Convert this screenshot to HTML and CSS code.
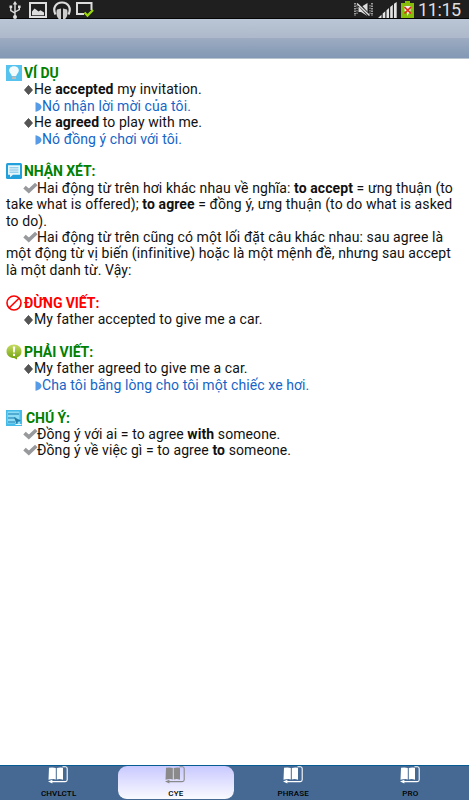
FILE: index.html
```html
<!DOCTYPE html>
<html lang="vi">
<head>
  <meta charset="UTF-8" />
  <meta name="viewport" content="width=device-width, initial-scale=1.0" />
  <title>CYE</title>
  <link rel="stylesheet" href="styles.css">
</head>
<body>
  <svg class="defs" width="0" height="0">
    <defs>
      <linearGradient id="green" x1="0" y1="0" x2="0" y2="1">
        <stop offset="0" stop-color="#c6dc62" />
        <stop offset="1" stop-color="#6fa00c" />
      </linearGradient>
      <symbol id="diamond" viewBox="0 0 9 10"><path d="M4.5 .5 8.5 5 4.5 9.5.5 5z" fill="#555" stroke="#444" stroke-width=".8" /></symbol>
      <symbol id="arrow" viewBox="0 0 7 10"><path d="M.5.3C4 .8 6.5 3 6.5 5S4 9.2.5 9.7z" fill="#559be8" /></symbol>
      <symbol id="check" viewBox="0 0 15 12"><path d="M1.5 5.2 5.8 9 13.3 2" fill="none" stroke="#98999d" stroke-width="3.7" /></symbol>
      <symbol id="book" viewBox="0 0 20 18">
        <path d="M1 1.8Q5 1 7.8 2V13.4Q5 12.6.5 13.8zM8.8 2Q12 1 15 1.8V13.8Q12 12.6 8.8 13.4z" fill="currentColor" />
        <path d="M14.5 .8H17.5Q19.2.8 19.2 2.8V13.8Q19.2 15.6 17.3 15.6H3" fill="none" stroke="currentColor" stroke-width="1.1" />
        <path d="M0 15.6 4.4 13.8V17.6z" fill="currentColor" />
      </symbol>
    </defs>
  </svg>

  <header class="status">
    <div class="status-left">
      <svg class="usb" width="12" height="18" viewBox="0 0 12 18" fill="none" stroke="#ddd" stroke-width="1.4">
        <path d="M6 2V15M1.8 6V9.5L6 12.2M10.3 6V8.5L6 11" />
        <path d="M6 0 8.3 3.6H3.7zM.5 4.5H3.2V7H.5zM9 4.5H11.6V7H9z" fill="#ddd" stroke="none" />
        <circle cx="6" cy="16" r="2" fill="#ddd" stroke="none" />
      </svg>
      <svg class="photo" width="18" height="16" viewBox="0 0 18 16">
        <rect x="1" y="1" width="16" height="14" fill="none" stroke="#ddd" stroke-width="2" />
        <path d="M3 13.3V9.5L5.5 6.5 7 7.5 9.5 9.5 11.5 8.3 15 10.5V13.3z" fill="#ddd" />
      </svg>
      <svg class="phones" width="18" height="18" viewBox="0 0 18 18">
        <path d="M2.5 13.5C-.8 7 3 1.5 9 1.5S18.8 7 15.5 13.5" fill="none" stroke="#ddd" stroke-width="2.2" />
        <path d="M4 8.5 8 7.5V18H6C4 17 2.7 12 4 8.5zM14 8.5 10 7.5V18H12C14 17 15.3 12 14 8.5z" fill="#ccc" />
      </svg>
      <svg width="18" height="16" viewBox="0 0 18 16" fill="none">
        <path d="M8 12H1V1H15.5V8" stroke="#ddd" stroke-width="2" />
        <path d="M8.5 10.5 11.5 13.5 17 8" stroke="#9bd60b" stroke-width="2.3" />
      </svg>
    </div>
    <div class="status-right">
      <svg class="mute" width="19" height="15" viewBox="0 0 19 15">
        <path d="M4.5 5H7L13.5 1V14L7 10H4.5z" fill="#ddd" />
        <path d="M3.5 1 15.5 14" stroke="#1f1f1f" stroke-width="3" />
        <path d="M3 1.5 15.5 13.5" stroke="#ddd" stroke-width="1.5" />
        <path d="M1 1V14M18 1V14" stroke="#ddd" stroke-width="1.3" stroke-dasharray="1.5 1" />
        <path d="M3 3V12M16 3V12" stroke="#aaa" stroke-dasharray="1.5 1" />
      </svg>
      <svg class="signal" width="19" height="16" viewBox="0 0 19 16" fill="#e4e4e4">
        <path d="M0 16 3.5 12.7V16zM4.7 16V11.5L7.3 9.2V16zM8.5 16V8.2L11 6V16zM12.2 16V5L14.8 2.8V16zM16 16V1.8L18.7 0V16z" />
      </svg>
      <svg class="battery" width="13" height="17" viewBox="0 0 13 17">
        <path d="M4 0H9V2H13V17H0V2H4z" fill="#86bd0b" />
        <path d="M3.5 5H9.5V10L6 15V11.5L3.5 10z" fill="#eee" />
        <path d="M3.5 6 10 12.5M10 6 3.5 12.5" stroke="#e52a1d" stroke-width="1.7" />
      </svg>
      <span class="clock">11:15</span>
    </div>
  </header>
  <div class="titlebar"></div>

  <main class="content">
    <section>
      <h2><svg class="icon" viewBox="0 0 16 16"><rect width="16" height="16" fill="#55c3ed" /><path d="M8 1.2C4.5 1.2 2.9 3.5 3.2 6 3.5 8 5.5 9.2 5.8 11H10.2C10.5 9.2 12.5 8 12.8 6 13.1 3.5 11.5 1.2 8 1.2z" fill="#f4fbfd" /><path d="M6 11.5H10V14H6z" fill="#bcbcbc" /></svg>VÍ DỤ</h2>
      <p class="item"><svg class="diamond"><use href="#diamond" /></svg>He <b>accepted</b> my invitation.</p>
      <p class="item trans"><svg class="arrow"><use href="#arrow" /></svg>Nó nhận lời mời của tôi.</p>
      <p class="item"><svg class="diamond"><use href="#diamond" /></svg>He <b>agreed</b> to play with me.</p>
      <p class="item trans"><svg class="arrow"><use href="#arrow" /></svg>Nó đồng ý chơi với tôi.</p>
    </section>

    <section>
      <h2><svg class="icon" viewBox="0 0 16 16"><rect width="16" height="16" rx="1.5" fill="#22a0dc" /><path d="M2 2.3H14V11.8H7L4 14.3V11.8H2z" fill="#e8f6fc" /><path d="M3.5 4.8H12.5M3.5 7H12.5M3.5 9.2H12.5" stroke="#67b9e0" stroke-width=".9" /></svg>NHẬN XÉT:</h2>
      <p class="note"><svg class="check"><use href="#check" /></svg>Hai động từ trên hơi khác nhau về nghĩa: <b>to accept</b> = ưng thuận (to<br>take what is offered); <b>to agree</b> = đồng ý, ưng thuận (to do what is asked<br>to do).</p>
      <p class="note"><svg class="check"><use href="#check" /></svg>Hai động từ trên cũng có một lối đặt câu khác nhau: sau agree là<br>một động từ vị biến (infinitive) hoặc là một mệnh đề, nhưng sau accept<br>là một danh từ. Vậy:</p>
    </section>

    <section>
      <h2 class="wrong"><svg class="icon" viewBox="0 0 16 16" fill="none" stroke="#ff0000" stroke-width="1.6"><circle cx="8" cy="8" r="7" /><path d="M3.2 13 13 3.2" /></svg>ĐỪNG VIẾT:</h2>
      <p class="item"><svg class="diamond"><use href="#diamond" /></svg>My father accepted to give me a car.</p>
    </section>

    <section>
      <h2><svg class="icon" viewBox="0 0 16 16"><path d="M8 .5C3.5.5.5 3.5.5 7.5S4 14 8 14L11 15.5V13.5C14 12.5 15.5 10.5 15.5 7.5 15.5 3.5 12.5.5 8 .5z" fill="url(#green)" /><path d="M6.8 2.5H9.2L8.8 8.5H7.2zM7 9.8H9V12H7z" fill="#fff" /></svg>PHẢI VIẾT:</h2>
      <p class="item"><svg class="diamond"><use href="#diamond" /></svg>My father agreed to give me a car.</p>
      <p class="item trans"><svg class="arrow"><use href="#arrow" /></svg>Cha tôi bằng lòng cho tôi một chiếc xe hơi.</p>
    </section>

    <section>
      <h2><svg class="icon wide" viewBox="0 0 16 16"><rect width="16" height="16" fill="#45bbe9" /><path d="M1.5 1.5H13.5V9L9 13.5H1.5z" fill="#8ddcf6" /><path d="M2 4H13M2 8H9.5M2 12H9" stroke="#1678a8" stroke-width="1.1" /><path d="M8 7 15 10.8 12 11.5 10.5 14z" fill="#257faa" /><path d="M13 12V15M9.5 14.5H15.5" stroke="#e8faff" /></svg>CHÚ Ý:</h2>
      <p class="note"><svg class="check"><use href="#check" /></svg>Đồng ý với ai = to agree <b>with</b> someone.</p>
      <p class="note"><svg class="check"><use href="#check" /></svg>Đồng ý về việc gì = to agree <b>to</b> someone.</p>
    </section>
  </main>

  <nav class="tabs">
    <div class="tab"><svg class="book"><use href="#book" /></svg><span>CHVLCTL</span></div>
    <div class="tab active"><svg class="book"><use href="#book" /></svg><span>CYE</span></div>
    <div class="tab"><svg class="book"><use href="#book" /></svg><span>PHRASE</span></div>
    <div class="tab"><svg class="book"><use href="#book" /></svg><span>PRO</span></div>
  </nav>
</body>
</html>
```
FILE: styles.css
```css
body {
  margin: 0;
  height: 800px;
  display: flex;
  flex-direction: column;
  overflow: hidden;
  background: #fff;
  color: #111;
  font-family: Roboto, sans-serif;
}

svg {
  flex: none;
}

.defs {
  position: absolute;
}

/* Status bar */
.status {
  height: 19px;
  box-sizing: border-box;
  border-bottom: 1px solid #050505;
  background: #1f1f1f;
  display: flex;
  justify-content: space-between;
}

.status-left {
  display: flex;
  align-items: flex-start;
  padding: 2px 0 0 9px;
}

.usb {
  margin-top: -1px;
}

.photo {
  margin: 0 6px 0 8px;
}

.phones {
  margin: -1px 5px 0 0;
}

.status-right {
  display: flex;
  align-items: flex-start;
  padding-right: 8px;
}

.mute {
  margin: 2px 5px 0 0;
}

.signal {
  margin: 2px 4px 0 0;
}

.battery {
  margin: 1px 4px 0 0;
}

.clock {
  width: 43px;
  color: #ddd;
  font-size: 18px;
  letter-spacing: -0.4px;
  line-height: 20px;
}

.titlebar {
  height: 40px;
  box-sizing: border-box;
  border-bottom: 1px solid #b9c4d1;
  background: linear-gradient(#bac5d5, #adb8ca 50%, #9cabc1 50%, #8298b4);
}

/* Lesson text */
.content {
  flex: 1;
  padding: 6px 6px 0;
  font-size: 14px;
  line-height: 16.41px;
  white-space: nowrap;
}

.content section {
  margin-bottom: 16.41px;
}

.content h2,
.content p {
  margin: 0;
  font-size: 14px;
  letter-spacing: 0.09px;
}

.content h2 {
  height: 16.41px;
  display: flex;
  color: #008000;
  font-weight: bold;
  letter-spacing: -0.08px;
}

.content h2.wrong {
  color: #ff0000;
}

.content b {
  font-weight: bold;
}

.icon {
  width: 16px;
  height: 16px;
  margin-right: 2px;
}

.icon.wide {
  margin-right: 4px;
}

.item {
  padding-left: 18px;
}

.trans {
  padding-left: 29px;
  color: #1565c8;
}

.note {
  text-indent: 17px;
}

.diamond {
  width: 9px;
  height: 10px;
  margin-right: 1px;
}

.arrow {
  width: 7px;
  height: 10px;
}

.check {
  width: 15px;
  height: 12px;
  margin-right: -1px;
}

.diamond,
.arrow,
.check {
  vertical-align: -1px;
}

/* Bottom tabs */
.tabs {
  height: 35px;
  box-sizing: border-box;
  border-top: 1px solid #075d91;
  background: #456993;
  display: grid;
  grid-template-columns: repeat(4, 1fr);
}

.tab {
  display: flex;
  flex-direction: column;
  align-items: center;
  color: #fff;
}

.tab span {
  margin-top: 5px;
  color: #000;
  font-size: 8px;
  font-weight: 500;
  line-height: 10px;
  letter-spacing: 0.15px;
}

.tab.active {
  height: 34px;
  margin: 0 1px;
  box-sizing: border-box;
  border-bottom: 1px solid #456993;
  border-radius: 9px;
  background: linear-gradient(#c9c9ff, #fafaff);
  color: #8a8a8a;
}

.book {
  width: 20px;
  height: 18px;
  margin-right: 1px;
}
```
